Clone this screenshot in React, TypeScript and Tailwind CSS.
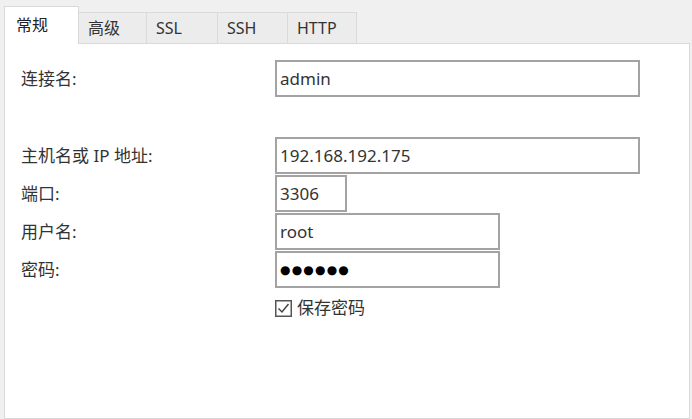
const tabs = [
  { label: "常规", w: "w-[75px]", active: true },
  { label: "高级", w: "w-[68px]", active: false },
  { label: "SSL", w: "w-[71px]", active: false },
  { label: "SSH", w: "w-[70px]", active: false },
  { label: "HTTP", w: "w-[69px]", active: false },
];

const Field = ({ label, value, width, secret }: { label: string; value: string; width: string; secret?: boolean }) => (
  <div className="flex items-center h-[37px]">
    <div className="w-[254px] text-[17px] text-[#333]">{label}</div>
    <div className={`${width} h-[37px] border-2 border-[#a3a3a3] bg-white flex items-center pl-[3px] text-[17px] text-[#333]`}>
      {secret ? (
        <span className="text-[12px] tracking-[1.2px] text-black font-['DejaVu_Sans',sans-serif]">{value}</span>
      ) : (
        value
      )}
    </div>
  </div>
);

export default function App() {
  return (
    <div className="h-[419px] overflow-hidden bg-[#f0f0f0] pt-[6px] pl-[4px] pr-[2px] flex flex-col font-['Noto_Sans','Noto_Sans_CJK_SC',sans-serif]">
      {/* Tabs */}
      <div className="flex items-end h-[37px] relative z-10">
        {tabs.map((t) => (
          <div
            key={t.label}
            className={
              t.active
                ? `${t.w} h-[38px] -mb-px bg-white border border-b-0 border-[#d9d9d9] pl-[11px] pt-[6px] text-[16px] text-[#222]`
                : `${t.w} h-[31px] bg-[#ececec] border border-l-0 border-b-0 border-[#dadada] pl-[9px] pt-[3px] text-[16px] text-[#333]`
            }
          >
            {t.label}
          </div>
        ))}
      </div>

      {/* Panel */}
      <div className="flex-1 bg-white border border-[#d9d9d9] pl-[16px] pt-[16px]">
        <Field label="连接名:" value="admin" width="w-[365px]" />
        <div className="mt-[40px] flex flex-col gap-[1px]">
          <Field label="主机名或 IP 地址:" value="192.168.192.175" width="w-[365px]" />
          <Field label="端口:" value="3306" width="w-[72px]" />
          <Field label="用户名:" value="root" width="w-[225px]" />
          <Field label="密码:" value="●●●●●●" width="w-[225px]" secret />
        </div>
        <div className="mt-[11px] ml-[254px] flex items-center gap-[5px] h-[18px]">
          <svg width="17" height="17" viewBox="0 0 17 17">
            <rect x="0.75" y="0.75" width="15.5" height="15.5" fill="white" stroke="#555" strokeWidth="1.5" />
            <path d="M3.5 8.5 L7 12 L13.5 4" fill="none" stroke="#444" strokeWidth="1.5" />
          </svg>
          <span className="text-[17px] text-[#333]">保存密码</span>
        </div>
      </div>
    </div>
  );
}
